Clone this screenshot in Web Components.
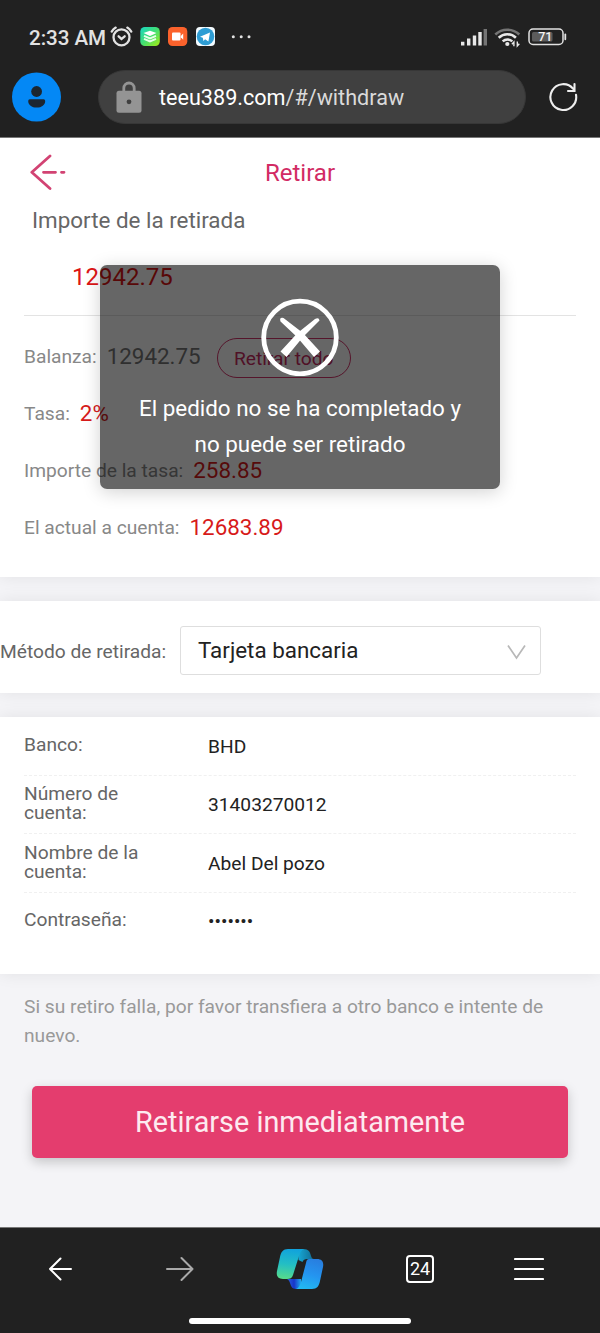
<!DOCTYPE html>
<html lang="es">
<head>
<meta charset="utf-8">
<title>Retirar</title>
<style>
  html, body {
    margin: 0;
    background: #f4f4f7;
    font-family: Roboto, "Liberation Sans", sans-serif;
    color: #666;
  }
</style>
</head>
<body>
<withdraw-page></withdraw-page>

<script>
class BaseElement extends HTMLElement {
  constructor() {
    super();
    this._root = this.attachShadow({mode: 'open'});
    this._root.innerHTML = this.render();
  }
}

class StatusBar extends BaseElement {
  render() {
    return `
      <style>
        :host { display: flex; align-items: center; height: 46px; padding: 15px 0 0 29px; color: #e2e2e2; }
        .time { font-size: 20.6px; font-weight: 500; width: 76px; white-space: nowrap; letter-spacing: -0.05px; }
        svg { display: block; flex: none; }
        .system { margin-left: 200px; margin-top: -2px; }
      </style>
      <span class="time">2:33 AM</span>
      <svg width="150" height="36" viewBox="105 20 150 36">
        <g fill="none" stroke="#e2e2e2" stroke-width="2.3" stroke-linecap="round">
          <circle cx="121.5" cy="37.3" r="8"/>
          <path d="M111.7 31.6a12 12 0 0 1 4-4M127.3 27.6a12 12 0 0 1 4 4M118.6 36.3l2.9 2.6 3.2-2.6"/>
        </g>
        <defs>
          <linearGradient id="stack" x1="0" y1="0" x2="1" y2="1">
            <stop offset="0" stop-color="#19d6c4"/><stop offset=".5" stop-color="#43df71"/><stop offset="1" stop-color="#a8ed12"/>
          </linearGradient>
        </defs>
        <rect x="140.3" y="27" width="19.5" height="19" rx="4.5" fill="url(#stack)"/>
        <path d="M143.5 33l6.500-2.300 6.500 2.300-6.500 3z" fill="#fff"/>
        <path d="M144 35.800l6 2.500 6-2.500M144 38.800l6 2.500 6-2.500" fill="none" stroke="#e5ffe9" stroke-width="2"/>
        <rect x="168" y="27" width="19.3" height="19" rx="4.5" fill="#fb622c"/>
        <rect x="172" y="32.5" width="8.5" height="8" rx="1" fill="#fff"/>
        <path d="M180.8 36l2.4-2.6v6.4l-2.4-2.6z" fill="#fff"/>
        <rect x="196" y="27" width="19" height="19" rx="4" fill="#f4fbff"/>
        <circle cx="205.5" cy="36.5" r="8.8" fill="#2e9dd4"/>
        <path d="M200 36.7l10-4.3-1.6 9.1-3.3-2.2-1.7 1.7-.6-3.2z" fill="#fff"/>
        <g fill="#e2e2e2"><circle cx="233.3" cy="36.8" r="1.5"/><circle cx="241.2" cy="36.8" r="1.5"/><circle cx="249" cy="36.8" r="1.5"/></g>
      </svg>
      <svg class="system" width="115" height="30" viewBox="455 22 115 30">
        <g stroke-width="3.4" stroke="#e8e8e8">
          <path d="M462.7 45.5v-3.7M468.7 45.5v-7M474.5 45.5V35.4M480 45.5V32"/>
          <path d="M485.3 45.5V29" stroke="#747474"/>
        </g>
        <g fill="none" stroke-width="2.6">
          <path d="M495.3 34.5a17.5 17.5 0 0 1 24 0" stroke="#747474"/>
          <path d="M498.7 37.7a12.5 12.5 0 0 1 17.2 0M502.7 41.4a7 7 0 0 1 9.6 0" stroke="#e8e8e8"/>
        </g>
        <circle cx="507.3" cy="44" r="2.1" fill="#e8e8e8"/>
        <path d="M513.9 46.3V42l-2 2.3M517.3 41.5v4.5l2-2.3" fill="none" stroke="#e8e8e8" stroke-width="1.4"/>
        <rect x="529" y="29" width="34" height="15.4" rx="4" fill="none" stroke="#e2e2e2" stroke-width="1.5"/>
        <rect x="532" y="32" width="20.5" height="9.5" rx="1.5" fill="#5c5c5c"/>
        <path d="M565.3 34.5v4.8" stroke="#e2e2e2" stroke-width="1.8" stroke-linecap="round"/>
        <text x="545.2" y="41.4" fill="#f4f4f4" font-size="12.4" font-weight="500" text-anchor="middle" font-family="Roboto">71</text>
      </svg>
    `;
  }
}

class AddressBar extends BaseElement {
  render() {
    return `
      <style>
        :host { display: flex; align-items: center; height: 71px; padding: 0 20px 0 12px; }
        svg { display: block; flex: none; }
        .field {
          display: flex; align-items: center;
          box-sizing: border-box; width: 428px; height: 54px; margin: 0 22px 0 37px; padding-left: 17px;
          background: #404040; border: 1px solid #373737; border-radius: 27px;
          color: #dadada; font-size: 21.6px; white-space: nowrap;
        }
        .url { margin-left: 17px; padding-top: 2px; }
        b { font-weight: 400; color: #fff; }
      </style>
      <svg width="49" height="50" viewBox="0 0 49 50">
        <circle cx="24.5" cy="25" r="24.5" fill="#0488f5"/>
        <circle cx="24.6" cy="19.5" r="5.4" fill="#1c2630"/>
        <path d="M17.8 27.3h13.8a1.6 1.6 0 0 1 1.6 1.6c0 4-3.6 6.600-8.5 6.600s-8.5-2.600-8.5-6.600a1.6 1.6 0 0 1 1.6-1.6z" fill="#1c2630"/>
      </svg>
      <div class="field">
        <svg width="26" height="32" viewBox="0 0 26 32">
          <path d="M7.800 11V7.200a5.200 5.200 0 0 1 10.400 0V11" fill="none" stroke="#949494" stroke-width="2.8"/>
          <rect x=".5" y="9.8" width="25" height="22" rx="2.5" fill="#949494"/>
          <circle cx="13" cy="20.8" r="2.4" fill="#404040"/>
        </svg>
        <span class="url"><b>teeu389.com</b>/#/withdraw</span>
      </div>
      <svg width="30" height="30" viewBox="548 82 30 30">
        <path d="M576 94.8A12.900 12.900 0 1 1 573.2 88.8M574.5 84v7h-6.5" fill="none" stroke="#eee" stroke-width="2.1" stroke-linecap="round"/>
      </svg>
    `;
  }
}

class PanelCard extends BaseElement {
  render() {
    return `
      <style>
        :host { display: block; box-sizing: border-box; background: #fff; box-shadow: 0 0 16px rgba(0, 0, 0, .08); }
      </style>
      <slot></slot>
    `;
  }
}

class PageTitle extends BaseElement {
  render() {
    return `
      <style>
        :host { display: grid; grid-template-columns: 1fr auto 1fr; align-items: center; height: 68px; padding: 0 30px; }
        h1 { margin: 0; padding-top: 1px; font-size: 24px; font-weight: 400; color: #d22b64; }
        svg { display: block; }
      </style>
      <svg width="37" height="36" viewBox="30 154 37 36">
        <path d="M50 156L31.8 172.3 50 188.5M43.5 172.3h12M61.5 172.3h2.5" fill="none" stroke="#d24373" stroke-width="2.8" stroke-linecap="round" stroke-linejoin="round"/>
      </svg>
      <h1><slot></slot></h1>
    `;
  }
}

class AmountField extends BaseElement {
  render() {
    return `
      <style>
        :host { display: block; margin: 0 24px; }
        .label { height: 28px; line-height: 29px; padding-left: 8px; font-size: 22.4px; color: #666; }
        .value {
          display: flex; align-items: center; height: 76px; padding: 5px 0 0 48px;
          border-bottom: 1px solid #e3e3e3; color: #dd1515; font-size: 24px;
        }
      </style>
      <div class="label"><slot name="label"></slot></div>
      <div class="value"><slot></slot></div>
    `;
  }
}

class SummaryRow extends BaseElement {
  render() {
    return `
      <style>
        :host { display: flex; align-items: center; height: 57.1px; padding-left: 24px; font-size: 19.2px; color: #888; white-space: nowrap; }
        .value { margin: -2px 0 0 10px; font-size: 22.4px; color: #d71a1a; }
        :host([muted]) .value { color: #777; }
      </style>
      <span><slot name="label"></slot></span>
      <span class="value"><slot></slot></span>
      <slot name="action"></slot>
    `;
  }
}

class PillButton extends BaseElement {
  render() {
    return `
      <style>
        :host {
          display: flex; align-items: center; justify-content: center; box-sizing: border-box;
          width: 134px; height: 40px; margin: 3px 0 0 16px; border: 1.5px solid #d5356c; border-radius: 20px;
          color: #c72b60; font-size: 19.2px;
        }
      </style>
      <slot></slot>
    `;
  }
}

class MethodSelect extends BaseElement {
  render() {
    return `
      <style>
        :host { display: flex; align-items: center; height: 92px; }
        label { width: 180px; padding-top: 9px; font-size: 19.2px; white-space: nowrap; }
        .box {
          display: flex; align-items: center; justify-content: space-between; box-sizing: border-box;
          width: 361px; height: 49px; margin-top: 7px; padding: 0 14px 2px 17px;
          border: 1.5px solid #dedede; border-radius: 3px; color: #222; font-size: 22.4px;
        }
        svg { display: block; margin-top: 5px; }
      </style>
      <label><slot name="label"></slot></label>
      <div class="box">
        <slot></slot>
        <svg width="19" height="16" viewBox="0 0 19 16"><path d="M1 1.5l8.5 12.5L18 1.5" fill="none" stroke="#b8b8b8" stroke-width="1.7"/></svg>
      </div>
    `;
  }
}

class DetailRow extends BaseElement {
  render() {
    return `
      <style>
        :host {
          display: grid; grid-template-columns: 136px 1fr; column-gap: 48px; align-items: center;
          box-sizing: border-box; height: 58.6px; margin: 0 24px; padding-bottom: 2px;
          border-bottom: 1px dashed #f0f0f0; font-size: 19.2px; line-height: 19.2px;
        }
        :host(:last-of-type) { border-bottom: 0; padding-bottom: 4px; }
        .value { padding-top: 3px; color: #222; }
      </style>
      <span><slot name="label"></slot></span>
      <span class="value"><slot></slot></span>
    `;
  }
}

class SubmitButton extends BaseElement {
  render() {
    return `
      <style>
        :host { display: block; margin: 0 32px; }
        button {
          display: block; width: 100%; height: 72px; padding: 0; border: 0; border-radius: 5px;
          background: #e43d6e; box-shadow: 0 4px 12px rgba(0, 0, 0, .2);
          color: #fdeaf0; font: 28.8px Roboto, "Liberation Sans", sans-serif;
        }
      </style>
      <button><slot></slot></button>
    `;
  }
}

class ToastMessage extends BaseElement {
  render() {
    return `
      <style>
        :host {
          position: absolute; left: 100px; top: 265px; z-index: 2;
          display: flex; flex-direction: column; align-items: center; box-sizing: border-box;
          width: 400px; height: 224px; padding: 33px 30px 0; border-radius: 7px;
          background: rgba(0, 0, 0, .6); box-shadow: 0 3px 18px rgba(0, 0, 0, .18);
          color: #fff; font-size: 22.4px; line-height: 35.7px; text-align: center;
        }
        svg { display: block; flex: none; margin-bottom: 15px; }
      </style>
      <svg width="78" height="78" viewBox="0 0 78 78">
        <circle cx="39" cy="39.5" r="36.3" fill="none" stroke="#fff" stroke-width="4.8"/>
        <g fill="#fff">
          <path d="M19.500 23.500Q18 19 22.500 20L42 35 59 53.500 53 59 36 39z"/>
          <path d="M58.500 22.500Q58 19 54 21L36.500 35 19.500 53.500 25.500 59 42 39z"/>
        </g>
      </svg>
      <span><slot></slot></span>
    `;
  }
}

class BottomNav extends BaseElement {
  render() {
    return `
      <style>
        :host { display: flex; flex-direction: column; align-items: center; height: 105px; background: #212121; border-top: 1px solid #777; }
        nav { display: grid; grid-template-columns: repeat(4, 120px) 98px; justify-items: center; align-items: center; width: 600px; height: 82px; }
        svg { display: block; }
        .home { width: 222px; height: 6px; margin-top: 8px; border-radius: 3px; background: #fff; }
        .tabs {
          display: flex; align-items: center; justify-content: center; box-sizing: border-box;
          width: 28px; height: 28px; margin-bottom: 1px; border: 2px solid #fff; border-radius: 4px;
          color: #fff; font-size: 18px; letter-spacing: -0.2px;
        }
      </style>
      <nav>
        <svg width="24" height="24" viewBox="0 0 24 24"><path d="M12.500 1.500L2 12l10.500 10.500M2 12h21" fill="none" stroke="#fff" stroke-width="2" stroke-linecap="round" stroke-linejoin="round"/></svg>
        <svg width="28" height="26" viewBox="0 0 28 26"><path d="M15.500 2l11 11-11 11M26.500 13H1" fill="none" stroke="#aaa" stroke-width="2" stroke-linecap="round" stroke-linejoin="round"/></svg>
        <svg width="48" height="42" viewBox="276 1248 48 42">
          <defs>
            <linearGradient id="left" x1=".4" y1="0" x2=".3" y2="1"><stop offset="0" stop-color="#11a3dc"/><stop offset=".5" stop-color="#23bec4"/><stop offset="1" stop-color="#57db8b"/></linearGradient>
            <linearGradient id="right" x1=".6" y1="0" x2=".3" y2="1"><stop offset="0" stop-color="#287fe0"/><stop offset=".5" stop-color="#2495f0"/><stop offset="1" stop-color="#22b9f1"/></linearGradient>
            <linearGradient id="under" x1="0" y1="0" x2="1" y2="0"><stop offset="0" stop-color="#2860de"/><stop offset=".5" stop-color="#1835c8"/><stop offset="1" stop-color="#20a9ed"/></linearGradient>
            <linearGradient id="over" x1="0" y1="0" x2="1" y2="0"><stop offset="0" stop-color="#16a7d5"/><stop offset="1" stop-color="#116a91"/></linearGradient>
          </defs>
          <path d="M287 1279h14v10h-5c-4 0-5-3-6-6-.7-2-1-3-3-4z" fill="url(#under)"/>
          <path d="M298 1249h5c6 0 7 3 8 7 .6 2 1.500 3 3 3h-7c-2 0-4 1-4.500 3l-4-2z" fill="url(#over)"/>
          <path d="M288 1249h16c-3 1-4 4-5 7l-6 19c-1 3-3 4-6 4h-4c-5 0-7-3-6-8l3-14c1-5 3-8 8-8z" fill="url(#left)"/>
          <path d="M309 1259h8c5 0 7 3 6 8l-3 14c-1 5-3 8-8 8h-16c3-1 4-4 5-7l5-19c.7-3 1-4 3-4z" fill="url(#right)"/>
        </svg>
        <div class="tabs">24</div>
        <svg width="30" height="24" viewBox="0 0 30 24"><path d="M1 2h28M1 12h28M1 22h28" stroke="#fff" stroke-width="2.2" stroke-linecap="round"/></svg>
      </nav>
      <div class="home"></div>
    `;
  }
}

class WithdrawPage extends BaseElement {
  render() {
    return `
      <style>
        :host { display: flex; flex-direction: column; position: relative; width: 600px; height: 1333px; overflow: hidden; }
        header { height: 137px; background: #212121; border-bottom: 1px solid #777; position: relative; z-index: 1; }
        main { display: flex; flex-direction: column; gap: 24px; height: 1089px; }
        .amount { height: 439px; }
        .rows { padding-top: 12px; }
        .method { height: 92px; }
        .details { height: 257px; }
        .hint { margin: -5px 24px 0; font-size: 19.2px; line-height: 28.8px; color: #999; }
        submit-button { margin-top: 11px; }
      </style>
      <header>
        <status-bar></status-bar>
        <address-bar></address-bar>
      </header>
      <main>
        <panel-card class="amount">
          <page-title>Retirar</page-title>
          <amount-field><span slot="label">Importe de la retirada</span>12942.75</amount-field>
          <div class="rows">
            <summary-row muted><span slot="label">Balanza:</span>12942.75<pill-button slot="action">Retirar todo</pill-button></summary-row>
            <summary-row><span slot="label">Tasa:</span>2%</summary-row>
            <summary-row><span slot="label">Importe de la tasa:</span>258.85</summary-row>
            <summary-row><span slot="label">El actual a cuenta:</span>12683.89</summary-row>
          </div>
        </panel-card>
        <panel-card class="method">
          <method-select><span slot="label">Método de retirada:</span>Tarjeta bancaria</method-select>
        </panel-card>
        <panel-card class="details">
          <detail-row><span slot="label">Banco:</span>BHD</detail-row>
          <detail-row><span slot="label">Número de cuenta:</span>31403270012</detail-row>
          <detail-row><span slot="label">Nombre de la cuenta:</span>Abel Del pozo</detail-row>
          <detail-row><span slot="label">Contraseña:</span>•••••••</detail-row>
        </panel-card>
        <p class="hint">Si su retiro falla, por favor transfiera a otro banco e intente de nuevo.</p>
        <submit-button>Retirarse inmediatamente</submit-button>
      </main>
      <bottom-nav></bottom-nav>
      <toast-message>El pedido no se ha completado y no puede ser retirado</toast-message>
    `;
  }
}

customElements.define('status-bar', StatusBar);
customElements.define('address-bar', AddressBar);
customElements.define('panel-card', PanelCard);
customElements.define('page-title', PageTitle);
customElements.define('amount-field', AmountField);
customElements.define('summary-row', SummaryRow);
customElements.define('pill-button', PillButton);
customElements.define('method-select', MethodSelect);
customElements.define('detail-row', DetailRow);
customElements.define('submit-button', SubmitButton);
customElements.define('toast-message', ToastMessage);
customElements.define('bottom-nav', BottomNav);
customElements.define('withdraw-page', WithdrawPage);
</script>
</body>
</html>
